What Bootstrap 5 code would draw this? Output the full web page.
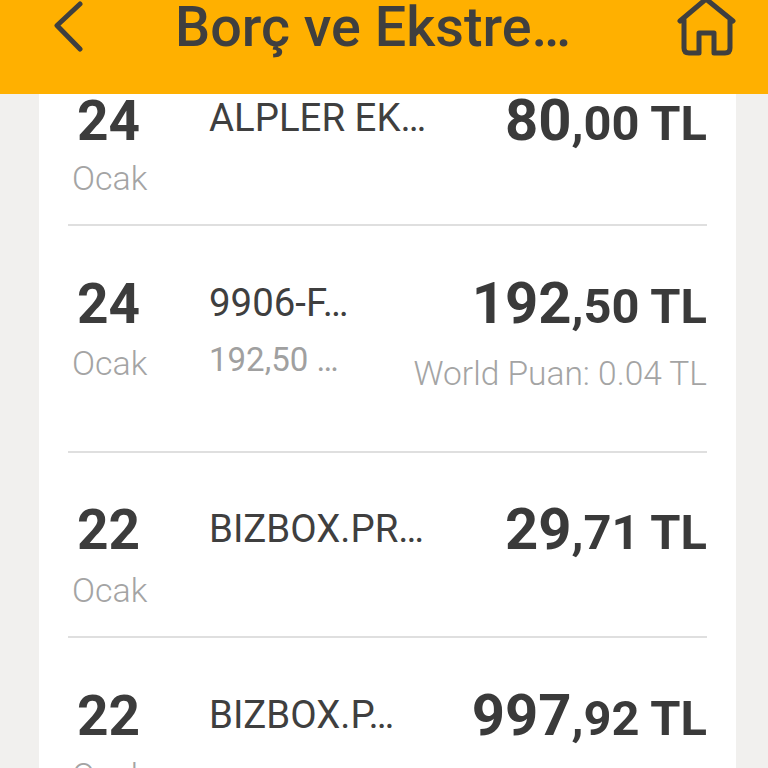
<!DOCTYPE html>
<html lang="tr"><head><meta charset="utf-8"><title>Borç ve Ekstre</title>
<link href="https://cdn.jsdelivr.net/npm/bootstrap@5.3.0/dist/css/bootstrap.min.css" rel="stylesheet">
<style>
html,body{height:768px;overflow:hidden}
body{background:#f1f0ee;font-family:Roboto,"Liberation Sans",sans-serif;color:#3c3c3c}
.topbar{height:94px;background:#ffb000}
.ttl{font-size:55.700px;font-weight:500;line-height:1;color:#3f3f3f;white-space:nowrap;margin-left:89px}
.back{margin-left:52px;flex:none}
.home{margin-right:31px;flex:none;overflow:visible}
.sheet{background:#fff;margin:0 32px 0 39px;padding:0 29px}
.entry{border-bottom:2px solid #dfdfdf}
.d-box{width:141px;flex:none}
.day{font-size:55px;font-weight:700;line-height:1;padding-left:9px}
.mon{font-size:34px;font-weight:300;color:#a4a4a4;line-height:1;padding-left:4px;margin-top:12px}
.who{font-size:38.400px;line-height:1;color:#3f3f3f;white-space:nowrap;margin-top:5px}
.sub{font-size:33px;font-weight:400;color:#a0a0a0;line-height:1;white-space:nowrap;margin-top:21px}
.amt{font-size:48.800px;font-weight:700;line-height:1;color:#3a3a3a;white-space:nowrap;margin-top:-3px}
.amt b{font-size:58px;font-weight:700}
.pts{font-size:33.500px;font-weight:300;color:#a4a4a4;line-height:1;white-space:nowrap;margin-top:25px}
.e1{height:132px}
.e2{height:227px;padding-top:51px}
.e3{height:185px;padding-top:50px}
.e4{height:200px;border:0;padding-top:51px}
.e2 .who,.e3 .who,.e4 .who{margin-top:7px}
.e2 .mon,.e4 .mon{margin-top:14px}
.e3 .mon{margin-top:15px}
</style></head><body>
<div class="topbar d-flex align-items-start">
 <svg class="back" width="34" height="52" viewBox="52 0 34 52"><path d="M80 4 57 25.500l23 23.500" fill="none" stroke="#3f3f3f" stroke-width="5" stroke-linecap="round" stroke-linejoin="round"/></svg>
 <div class="ttl me-auto">Borç ve Ekstre…</div>
 <svg class="home" width="60" height="56" viewBox="677 0 60 56"><path d="M680 21 706-1l27 22M684 20v28q0 5 5 5h10V33h15v20h11q5 0 5-5V20" fill="none" stroke="#3f3f3f" stroke-width="5" stroke-linecap="round" stroke-linejoin="round"/></svg>
</div>
<div class="sheet">
 <div class="entry e1 d-flex"><div class="d-box"><div class="day">24</div><div class="mon">Ocak</div></div><div class="flex-grow-1"><div class="who">ALPLER EK…</div></div><div class="text-end"><div class="amt"><b>80</b>,00 TL</div></div></div>
 <div class="entry e2 d-flex"><div class="d-box"><div class="day">24</div><div class="mon">Ocak</div></div><div class="flex-grow-1"><div class="who">9906-F…</div><div class="sub">192,50 …</div></div><div class="text-end"><div class="amt"><b>192</b>,50 TL</div><div class="pts">World Puan: 0.04 TL</div></div></div>
 <div class="entry e3 d-flex"><div class="d-box"><div class="day">22</div><div class="mon">Ocak</div></div><div class="flex-grow-1"><div class="who">BIZBOX.PR…</div></div><div class="text-end"><div class="amt"><b>29</b>,71 TL</div></div></div>
 <div class="entry e4 d-flex"><div class="d-box"><div class="day">22</div><div class="mon">Ocak</div></div><div class="flex-grow-1"><div class="who">BIZBOX.P…</div></div><div class="text-end"><div class="amt"><b>997</b>,92 TL</div></div></div>
</div>
</body></html>
